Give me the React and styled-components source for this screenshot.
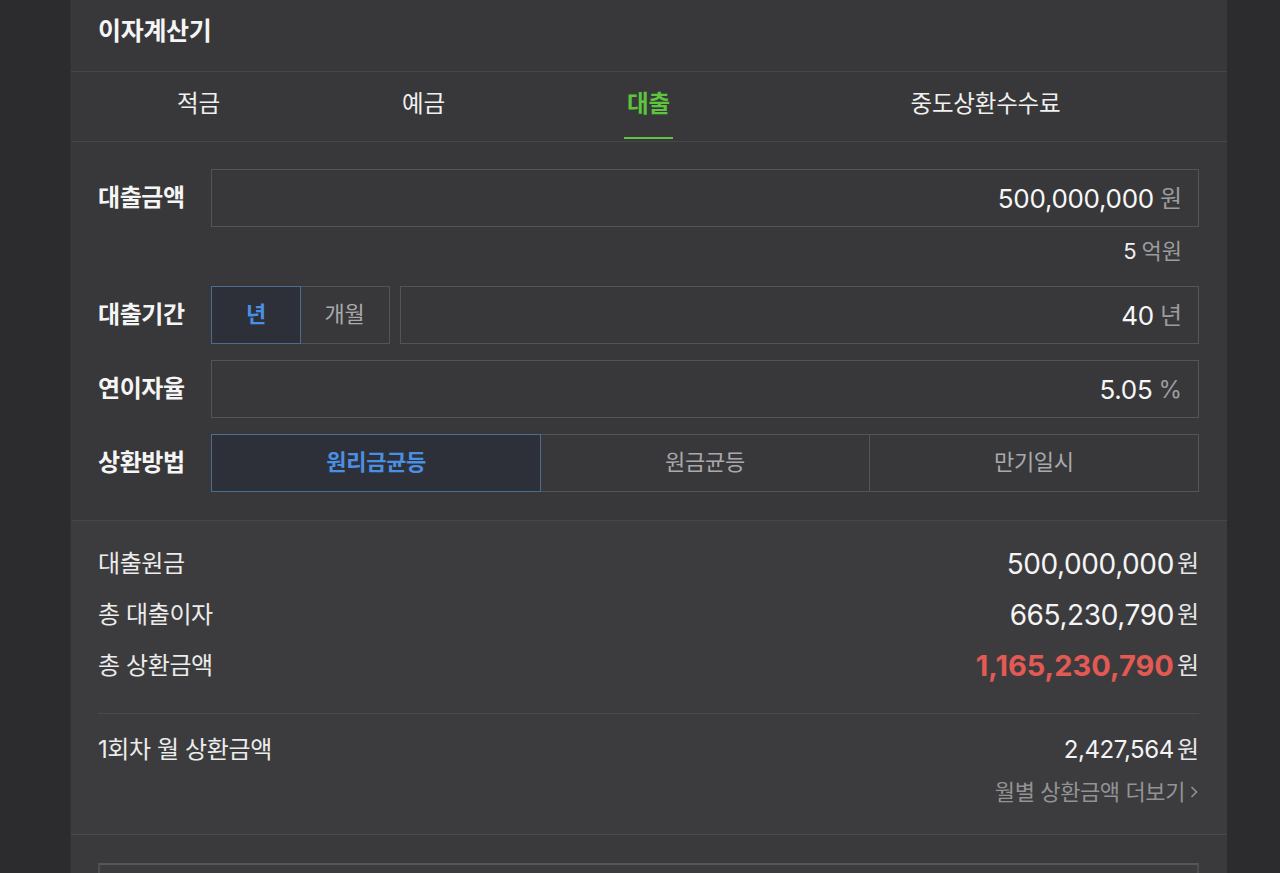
import React from "react";
import styled, { createGlobalStyle } from "styled-components";

const Global = createGlobalStyle`
  html, body { margin: 0; padding: 0; background: #2c2c2e; }
  body {
    font-family: "Inter", "Noto Sans CJK KR", "Noto Sans", sans-serif;
    color: #f2f2f2;
    -webkit-font-smoothing: antialiased;
  }
  * { box-sizing: border-box; }
`;

const Page = styled.div`
  display: flex;
  min-height: 873px;
  padding-left: 70px;
`;

const Card = styled.div`
  width: 1157px;
  background: #38383a;
  border-left: 1px solid #323234;
`;

const Header = styled.div`
  height: 72px;
  display: flex;
  align-items: center;
  padding: 0 27px 9px;
  border-bottom: 1px solid #47474a;
`;

const Title = styled.h1`
  margin: 0;
  font-size: 25px;
  line-height: 32px;
  font-weight: 700;
  color: #f5f5f5;
  letter-spacing: -0.3px;
`;

const Tabs = styled.nav`
  height: 70px;
  display: flex;
  padding: 0 17px 0 15px;
  border-bottom: 1px solid #47474a;
`;

const Tab = styled.div`
  flex: ${(p) => (p.$wide ? "1" : "0 0 225px")};
  display: flex;
  align-items: center;
  justify-content: center;
  font-size: 23.5px;
  line-height: 30px;
  color: ${(p) => (p.$active ? "#5cc43e" : "#f0f0f0")};
  font-weight: ${(p) => (p.$active ? 700 : 400)};
  padding-bottom: 5px;
  letter-spacing: -0.2px;
`;

const TabLabel = styled.span`
  position: relative;
  display: inline-block;
  &::after {
    content: "";
    display: ${(p) => (p.$active ? "block" : "none")};
    position: absolute;
    left: -3px;
    right: -3px;
    bottom: -20px;
    height: 2px;
    background: #5cc43e;
  }
`;

const Form = styled.section`
  padding: 27px 28px 28px 27px;
  display: flex;
  flex-direction: column;
  gap: 16px;
  border-bottom: 1px solid #47474a;
`;

const FieldGroup = styled.div`
  display: flex;
  flex-direction: column;
`;

const Row = styled.div`
  display: flex;
  align-items: center;
`;

const Label = styled.div`
  flex: 0 0 113px;
  font-size: 24px;
  line-height: 32px;
  font-weight: 700;
  color: #f5f5f5;
  letter-spacing: -0.4px;
`;

const InputBox = styled.div`
  flex: 1;
  height: 58px;
  border: 1.5px solid #545457;
  display: flex;
  align-items: center;
  justify-content: flex-end;
  gap: 6px;
  padding: 2px 16px 0;
  background: #38383a;
`;

const InputValue = styled.span`
  font-size: 26px;
  line-height: 32px;
  color: #f7f7f7;
  letter-spacing: -0.3px;
`;

const Unit = styled.span`
  font-size: ${(p) => p.$size || 24}px;
  line-height: 32px;
  color: #9c9c9e;
`;

const Hint = styled.div`
  height: 43px;
  display: flex;
  justify-content: flex-end;
  align-items: baseline;
  gap: 5px;
  padding: 8px 17px 0 0;
`;

const HintNum = styled.span`
  font-size: 22px;
  line-height: 32px;
  color: #f0f0f0;
`;

const SegGroup = styled.div`
  display: flex;
  flex: ${(p) => (p.$fill ? "1" : "0 0 auto")};
  margin-right: ${(p) => (p.$fill ? "0" : "10px")};
`;

const Seg = styled.div`
  flex: ${(p) => (p.$w ? `0 0 ${p.$w}px` : "1")};
  height: 58px;
  display: flex;
  align-items: center;
  justify-content: center;
  font-size: 22px;
  line-height: 30px;
  padding-bottom: 2px;
  border: 1.5px solid ${(p) => (p.$active ? "#4b6d93" : "#545457")};
  margin-left: -1.5px;
  position: relative;
  z-index: ${(p) => (p.$active ? 1 : 0)};
  background: ${(p) => (p.$active ? "#2d3039" : "#38383a")};
  color: ${(p) => (p.$active ? "#4b8fe2" : "#a9a9ab")};
  font-weight: ${(p) => (p.$active ? 700 : 400)};
  letter-spacing: -0.3px;
  &:first-child { margin-left: 0; }
`;

const Results = styled.section`
  background: #3c3c3e;
  padding: 17px 28px 27px 27px;
  border-bottom: 1px solid #4a4a4c;
`;

const ResultRow = styled.div`
  height: 51px;
  display: flex;
  align-items: center;
  justify-content: space-between;
`;

const ResultLabel = styled.div`
  font-size: 24px;
  line-height: 32px;
  color: #ececec;
  letter-spacing: -0.4px;
`;

const ResultValue = styled.div`
  display: flex;
  align-items: center;
  gap: 3px;
`;

const Amount = styled.span`
  font-size: ${(p) => p.$size || 28}px;
  line-height: 34px;
  font-weight: ${(p) => (p.$bold ? 700 : 400)};
  color: ${(p) => (p.$red ? "#e35954" : "#f4f4f4")};
  letter-spacing: ${(p) => (p.$bold ? "0px" : "-0.4px")};
`;

const Won = styled.span`
  font-size: 24px;
  line-height: 32px;
  color: #e6e6e6;
`;

const Divider = styled.hr`
  border: 0;
  height: 1px;
  background: #4a4a4c;
  margin: 22px 0 10px;
`;

const MoreLink = styled.div`
  display: flex;
  justify-content: flex-end;
  align-items: center;
  gap: 5px;
  font-size: 22px;
  line-height: 30px;
  color: #939395;
  margin-top: 2px;
  letter-spacing: -0.4px;
`;

const Next = styled.section`
  padding: 28px 28px 0 27px;
  background: #3a3a3c;
`;

const NextBox = styled.div`
  height: 80px;
  border-top: 2px solid #56565a;
  border-left: 2px solid #4e4e52;
  border-right: 2px solid #4e4e52;
  background: #3c3c3e;
`;

const Chevron = () => (
  <svg width="9" height="16" viewBox="0 0 9 16" fill="none">
    <path d="M1.5 3 L6.5 8 L1.5 13" stroke="#939395" strokeWidth="1.6" />
  </svg>
);

export default function App() {
  return (
    <>
      <Global />
      <Page>
        <Card>
          <Header>
            <Title>이자계산기</Title>
          </Header>
          <Tabs>
            <Tab><TabLabel>적금</TabLabel></Tab>
            <Tab><TabLabel>예금</TabLabel></Tab>
            <Tab $active><TabLabel $active>대출</TabLabel></Tab>
            <Tab $wide><TabLabel>중도상환수수료</TabLabel></Tab>
          </Tabs>
          <Form>
            <FieldGroup>
              <Row>
                <Label>대출금액</Label>
                <InputBox>
                  <InputValue>500,000,000</InputValue>
                  <Unit>원</Unit>
                </InputBox>
              </Row>
              <Hint>
                <HintNum>5</HintNum>
                <Unit $size={22}>억원</Unit>
              </Hint>
            </FieldGroup>
            <Row>
              <Label>대출기간</Label>
              <SegGroup>
                <Seg $w={90} $active>년</Seg>
                <Seg $w={90}>개월</Seg>
              </SegGroup>
              <InputBox>
                <InputValue>40</InputValue>
                <Unit>년</Unit>
              </InputBox>
            </Row>
            <Row>
              <Label>연이자율</Label>
              <InputBox>
                <InputValue>5.05</InputValue>
                <Unit>%</Unit>
              </InputBox>
            </Row>
            <Row>
              <Label>상환방법</Label>
              <SegGroup $fill>
                <Seg $active>원리금균등</Seg>
                <Seg>원금균등</Seg>
                <Seg>만기일시</Seg>
              </SegGroup>
            </Row>
          </Form>
          <Results>
            <ResultRow>
              <ResultLabel>대출원금</ResultLabel>
              <ResultValue>
                <Amount>500,000,000</Amount>
                <Won>원</Won>
              </ResultValue>
            </ResultRow>
            <ResultRow>
              <ResultLabel>총 대출이자</ResultLabel>
              <ResultValue>
                <Amount>665,230,790</Amount>
                <Won>원</Won>
              </ResultValue>
            </ResultRow>
            <ResultRow>
              <ResultLabel>총 상환금액</ResultLabel>
              <ResultValue>
                <Amount $bold $red $size={29}>1,165,230,790</Amount>
                <Won>원</Won>
              </ResultValue>
            </ResultRow>
            <Divider />
            <ResultRow>
              <ResultLabel>1회차 월 상환금액</ResultLabel>
              <ResultValue>
                <Amount $size={24}>2,427,564</Amount>
                <Won>원</Won>
              </ResultValue>
            </ResultRow>
            <MoreLink>
              월별 상환금액 더보기 <Chevron />
            </MoreLink>
          </Results>
          <Next>
            <NextBox />
          </Next>
        </Card>
      </Page>
    </>
  );
}
